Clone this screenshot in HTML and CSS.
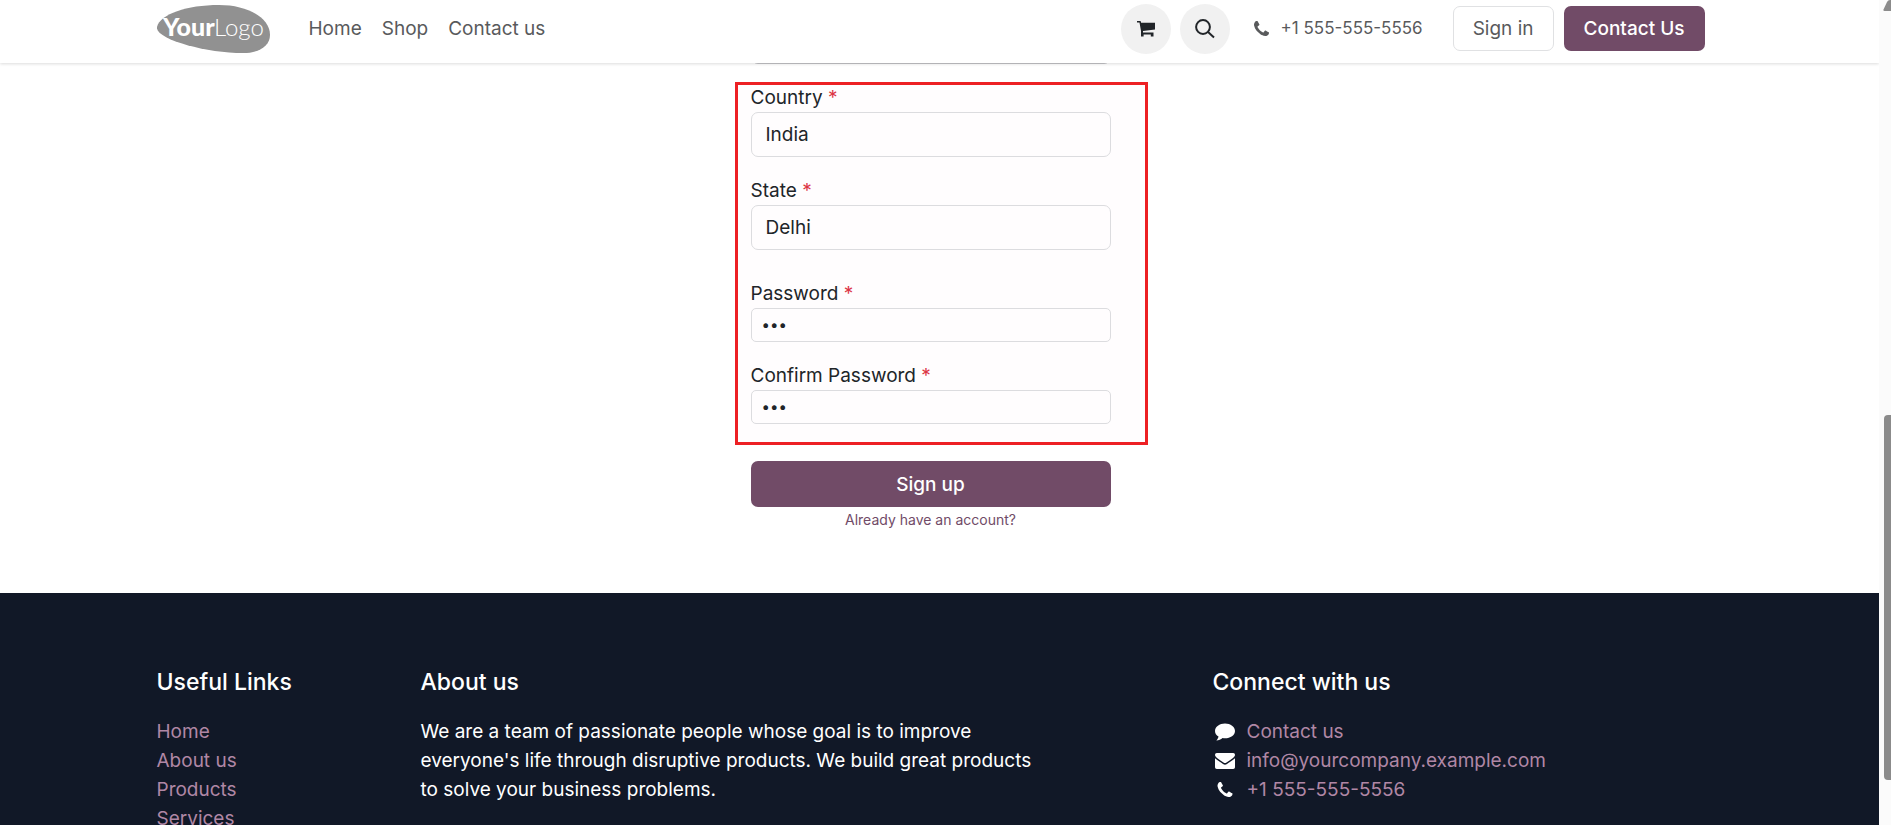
FILE: index.html
```html
<!DOCTYPE html>
<html lang="en">
<head>
<meta charset="utf-8">
<title>Sign up | Your Logo</title>
<link rel="stylesheet" href="styles.css">
</head>
<body>
<svg class="sprite" aria-hidden="true">
  <symbol id="phone" viewBox="0 0 1408 1408">
    <path d="M1408 1112q0 27-10 70.500t-21 68.500q-21 50-122 106-94 51-186 51-27 0-53-3.500t-57.500-12.500-47-14.500-55.500-20.500-49-18q-98-35-175-83-127-79-264-216t-216-264q-48-77-83-175-3-9-18-49t-20.500-55.500-14.500-47-12.500-57.500-3.500-53q0-92 51-186 56-101 106-122 25-11 68.500-21t70.500-10q14 0 21 3 18 6 53 76 11 19 30 54t35 63.500 31 53.500q3 4 17.500 25t21.500 35.500 7 28.500q0 20-28.500 50t-62 55-62 53-28.500 46q0 9 5 22.500t8.500 20.500 14 24 11.500 19q76 137 174 235t235 174q2 1 19 11.500t24 14 20.500 8.500 22.500 5q18 0 46-28.500t53-62 55-62 50-28.500q14 0 28.500 7t35.500 21.500 25 17.500q25 15 53.500 31t63.500 35 54 30q70 35 76 53 3 7 3 21z"/>
  </symbol>
</svg>
<div class="page">
  <header class="header">
    <div class="container bar">
      <a class="logo" href="#" aria-label="Your Logo">
        <svg width="113" height="48" viewBox="0 0 113 48">
          <path class="blob" d="M0 22C3 9 30 0 62 0C91 0 113 13 113 30C113 41 102 48 86 48C49 48-2 34 0 22Z"/>
          <text x="6" y="31" class="logo-bold">Your</text>
          <text x="57" y="31" class="logo-thin">Logo</text>
        </svg>
      </a>
      <nav class="nav">
        <a href="#">Home</a>
        <a href="#">Shop</a>
        <a href="#">Contact us</a>
      </nav>
      <div class="tools">
        <a class="round" href="#" aria-label="Cart">
          <svg width="18" height="16" viewBox="0 0 18 16"><path d="M0 0H3.600L4.100 1.700H18V8.500L6 10V11.400H16.500V15.500H13.800V13.500H6.600V15.500H4V10L2.500 1.500H0Z"/></svg>
        </a>
        <button class="round" type="button" aria-label="Search">
          <svg width="20" height="20" viewBox="0 0 20 20"><circle cx="8" cy="8" r="6.900"/><path d="M12.800 12.800L19 18.500"/></svg>
        </button>
      </div>
      <a class="phone" href="#"><svg width="15" height="15"><use href="#phone"/></svg><span>+1 555-555-5556</span></a>
      <a class="btn outline" href="#">Sign in</a>
      <a class="btn primary" href="#">Contact Us</a>
    </div>
  </header>
  <main>
    <form class="signup">
      <input class="field tall" type="text" aria-label="City">
      <div class="required-group">
        <div class="row"><label for="country">Country <span class="star">*</span></label>
          <select class="field tall" id="country"><option>India</option></select></div>
        <div class="row"><label for="state">State <span class="star">*</span></label>
          <select class="field tall" id="state"><option>Delhi</option></select></div>
        <div class="row spaced"><label for="password">Password <span class="star">*</span></label>
          <input class="field secret" type="password" id="password" value="abc"></div>
        <div class="row"><label for="confirm">Confirm Password <span class="star">*</span></label>
          <input class="field secret" type="password" id="confirm" value="abc"></div>
      </div>
      <button class="btn primary submit" type="submit">Sign up</button>
      <a class="login" href="#">Already have an account?</a>
    </form>
  </main>
  <footer class="footer">
    <div class="container columns">
      <section>
        <h5>Useful Links</h5>
        <ul>
          <li><a href="#">Home</a></li>
          <li><a href="#">About us</a></li>
          <li><a href="#">Products</a></li>
          <li><a href="#">Services</a></li>
        </ul>
      </section>
      <section class="about">
        <h5>About us</h5>
        <p>We are a team of passionate people whose goal is to improve everyone's life through disruptive products. We build great products to solve your business problems.</p>
      </section>
      <section>
        <h5>Connect with us</h5>
        <ul class="contacts">
          <li><svg width="20" height="18" viewBox="0 0 20 18"><path d="M10 0.500C15.500 0.500 20 3.700 20 8S15.500 15.300 10 15.300C9.200 15.300 8.400 15.200 7.600 15.100C5.900 16.600 3.800 17.400 1.300 17.600C2.300 16.500 3.200 15.300 3.500 13.600C1.300 12.300 0 10.300 0 8C0 3.700 4.500 0.500 10 0.500Z"/></svg><a href="#">Contact us</a></li>
          <li><svg width="20" height="16" viewBox="0 0 20 16"><path d="M0 5.200C3 7.500 6 9.500 8 11C9.300 11.900 10.700 11.900 12 11C14 9.500 17 7.500 20 5.200V14.200Q20 16 18.200 16H1.800Q0 16 0 14.200ZM1.800 0H18.200Q20 0 20 1.800C20 3 19 4.200 18 4.900C15.500 6.700 13.400 8.200 11.500 9.500C10.500 10.200 9.500 10.200 8.500 9.500C6.600 8.200 4.500 6.700 2 4.900C1 4.200 0 3 0 1.800Q0 0 1.800 0Z"/></svg><a href="#">info@yourcompany.example.com</a></li>
          <li><svg width="20" height="15"><use href="#phone"/></svg><a href="#">+1 555-555-5556</a></li>
        </ul>
      </section>
    </div>
  </footer>
</div>
<div class="scrollbar" aria-hidden="true">
  <svg width="8" height="12" viewBox="0 0 8 12"><path d="M7 0H8V11H1.500Q0 11 0.500 9.500L4 2Q5 0 7 0Z"/></svg>
  <div class="thumb"></div>
</div>
</body>
</html>
```
FILE: styles.css
```css
* { box-sizing: border-box; }
body {
  margin: 0;
  height: 100vh;
  overflow: hidden;
  display: flex;
  background: #fff;
  color: #212529;
  font: 400 19px/29px Inter, sans-serif;
}
a { color: inherit; text-decoration: none; }
button, input, select { font: inherit; color: inherit; }
.sprite { display: none; }
.page { flex: 1; height: 100vh; overflow: hidden; display: flex; flex-direction: column; }
.container { max-width: 1584px; margin: 0 auto; padding: 0 18px; }

.header {
  position: relative;
  z-index: 2;
  flex: none;
  padding-right: 18px;
  background: #fff;
  box-shadow: 0 1px 3px rgba(0, 0, 0, .14);
  color: #595a5c;
}
.bar { display: flex; align-items: center; height: 63px; padding-bottom: 6px; }
.logo { display: flex; }
.blob { fill: #919191; }
.logo text { fill: #fff; font-family: Lato, sans-serif; font-size: 24px; }
.logo .logo-bold { font-weight: 900; font-size: 25px; }
.logo .logo-thin { font-weight: 300; }
.nav { display: flex; gap: 20px; margin-left: 39px; margin-right: auto; }
.tools { display: flex; gap: 9px; margin-right: 24px; }
.round {
  display: flex;
  align-items: center;
  justify-content: center;
  width: 50px;
  height: 50px;
  padding: 0;
  border: 0;
  border-radius: 50%;
  background: #f1f1f1;
  fill: #212529;
}
button.round { fill: none; stroke: #212529; stroke-width: 2; }
.phone { display: flex; align-items: center; gap: 12px; margin-right: 30px; font-size: 17px; fill: #595a5c; }
.btn {
  display: block;
  padding: 7px 19px;
  border: 1px solid transparent;
  border-radius: 7px;
  text-align: center;
}
.outline { border-color: #e0e1e3; margin-right: 10px; }
.primary { background: #714b67; color: #fff; font-weight: 500; }

main { flex: none; padding-right: 18px; margin-top: -44px; }
.signup { display: flex; flex-direction: column; width: 360px; margin: 0 auto; padding-bottom: 61px; }
.required-group { position: relative; z-index: 0; display: flex; flex-direction: column; gap: 19px; margin: 19px 0 37px; }
.required-group::before {
  content: "";
  position: absolute;
  z-index: -1;
  inset: -1px -37px -21px -16px;
  border: 3px solid #ed2024;
  background: #fffdfe;
}
.row { display: flex; flex-direction: column; }
.spaced { margin-top: 10px; }
.star { color: #dc3545; }
.field {
  width: 100%;
  margin: 0;
  border: 1px solid #dcdcdf;
  border-radius: 7px;
  background: transparent;
  appearance: none;
}
.tall { height: 45px; padding: 0 14px; }
.secret { height: 34px; padding: 0 10px 2px; border-radius: 5px; font-size: 15px; }
.signup > .field { border-color: #c4c4c8; }
.submit { min-height: 46px; }
.login { align-self: center; color: #714b67; font-size: 14px; line-height: 25px; }

.footer { flex: 1 0 auto; padding: 75px 18px 48px 0; background: #111827; color: #fff; }
.columns { display: grid; grid-template-columns: 2fr 6fr 4fr; padding: 0; }
.columns section { padding: 0 18px; }
h5 { margin: 0 0 20px; font-size: 23px; line-height: 29px; font-weight: 500; }
ul { list-style: none; margin: 0; padding: 0; }
.footer li a { color: #b087a5; }
.about p { margin: 0; max-width: 625px; }
.contacts li { display: flex; align-items: center; gap: 12px; padding-left: 2px; fill: #fff; }

.scrollbar { flex: none; width: 12px; height: 100vh; background: #fbfbfb; display: flex; flex-direction: column; align-items: flex-end; fill: #8b8b8b; }
.thumb { width: 7px; height: 44.2%; margin-top: 403px; border-radius: 4px 0 0 4px; background: #8b8b8b; }
```
